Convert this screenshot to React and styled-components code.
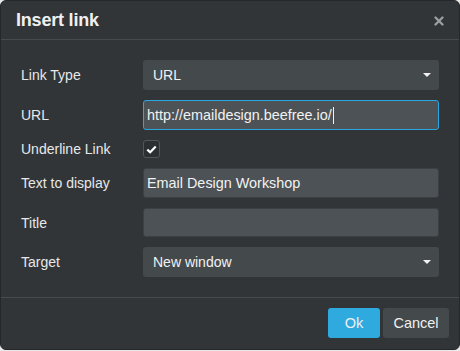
import React from 'react';
import styled, { createGlobalStyle } from 'styled-components';

const GlobalStyle = createGlobalStyle`
    html, body {
        margin: 0;
        padding: 0;
        background: #e9e9e9;
    }
    body {
        font-family: "Liberation Sans", Arial, sans-serif;
    }
`

const Dialog = styled.div`
    width: 460px;
    height: 350px;
    box-sizing: border-box;
    background: #313538;
    border: 1px solid #25282a;
    border-radius: 6px;
    display: flex;
    flex-direction: column;
    overflow: hidden;
`

const Header = styled.div`
    height: 39px;
    box-sizing: border-box;
    display: flex;
    align-items: center;
    justify-content: space-between;
    padding: 0 14px 0 15px;
    border-bottom: 1px solid #464b4e;
`

const Title = styled.h2`
    margin: 0;
    font-size: 18px;
    font-weight: bold;
    color: #f0f0f0;
    letter-spacing: -0.2px;
`

const Close = styled.button`
    background: none;
    border: none;
    padding: 0;
    width: 12px;
    height: 12px;
    display: flex;
    cursor: pointer;
    margin-top: 2px;
`

const Body = styled.div`
    display: grid;
    grid-template-columns: 122px 296px;
    grid-template-rows: 30px 30px 18px 30px 29px 30px;
    row-gap: 10px;
    padding: 20px 0 20px 20px;
    border-bottom: 1px solid #464b4e;
`

const Label = styled.label`
    display: flex;
    align-items: center;
    font-size: 14px;
    color: #e8e8e8;
`

const Select = styled.div`
    display: flex;
    align-items: center;
    justify-content: space-between;
    background: #44494c;
    border-radius: 3px;
    padding: 0 8px 0 10px;
    font-size: 14px;
    color: #f2f2f2;
`

const Caret = styled.span`
    width: 0;
    height: 0;
    border-left: 4px solid transparent;
    border-right: 4px solid transparent;
    border-top: 4px solid #f2f2f2;
`

const Input = styled.div`
    display: flex;
    align-items: center;
    box-sizing: border-box;
    background: #4d5256;
    border: 1px solid ${p => (p.$focused ? '#2aa6e0' : '#3c4043')};
    border-radius: 3px;
    padding: 0 3px;
    font-size: 14.4px;
    color: #f2f2f2;
`

const Cursor = styled.span`
    display: inline-block;
    width: 1px;
    height: 17px;
    background: #f2f2f2;
    margin-left: 1px;
`

const Check = styled.div`
    width: 17px;
    height: 18px;
    box-sizing: border-box;
    background: #2b2f32;
    border: 1px solid #50565a;
    border-radius: 3px;
    display: flex;
    align-items: center;
    justify-content: center;
`

const Footer = styled.div`
    flex: 1;
    display: flex;
    justify-content: flex-end;
    align-items: flex-start;
    gap: 3px;
    padding: 10px 10px 0 0;
`

const Button = styled.button`
    height: 30px;
    width: ${p => p.$w}px;
    border: none;
    border-radius: 3px;
    background: ${p => (p.$primary ? '#2eaadf' : '#44494c')};
    color: #f0f0f0;
    font-family: "Liberation Sans", Arial, sans-serif;
    font-size: 14.5px;
    cursor: pointer;
`

const App = () => {
    return (
        <>
            <GlobalStyle />
            <Dialog>
                <Header>
                    <Title>Insert link</Title>
                    <Close aria-label='close'>
                        <svg width='12' height='12' viewBox='0 0 12 12'>
                            <path d='M2.5 2.5 L9.5 9.5 M9.5 2.5 L2.5 9.5' stroke='#9b9d9f' strokeWidth='2.4' strokeLinecap='round' />
                        </svg>
                    </Close>
                </Header>

                <Body>
                    <Label>Link Type</Label>
                    <Select>URL<Caret /></Select>

                    <Label>URL</Label>
                    <Input $focused>http://emaildesign.beefree.io/<Cursor /></Input>

                    <Label>Underline Link</Label>
                    <div>
                        <Check>
                            <svg width='11' height='9' viewBox='0 0 11 9'>
                                <path d='M1.3 4.6 L4.2 7.3 L9.7 1.5' stroke='#ffffff' strokeWidth='2.2' fill='none' />
                            </svg>
                        </Check>
                    </div>

                    <Label>Text to display</Label>
                    <Input>Email Design Workshop</Input>

                    <Label>Title</Label>
                    <Input></Input>

                    <Label>Target</Label>
                    <Select>New window<Caret /></Select>
                </Body>

                <Footer>
                    <Button $primary $w={52}>Ok</Button>
                    <Button $w={66}>Cancel</Button>
                </Footer>
            </Dialog>
        </>
    )
}

export default App
